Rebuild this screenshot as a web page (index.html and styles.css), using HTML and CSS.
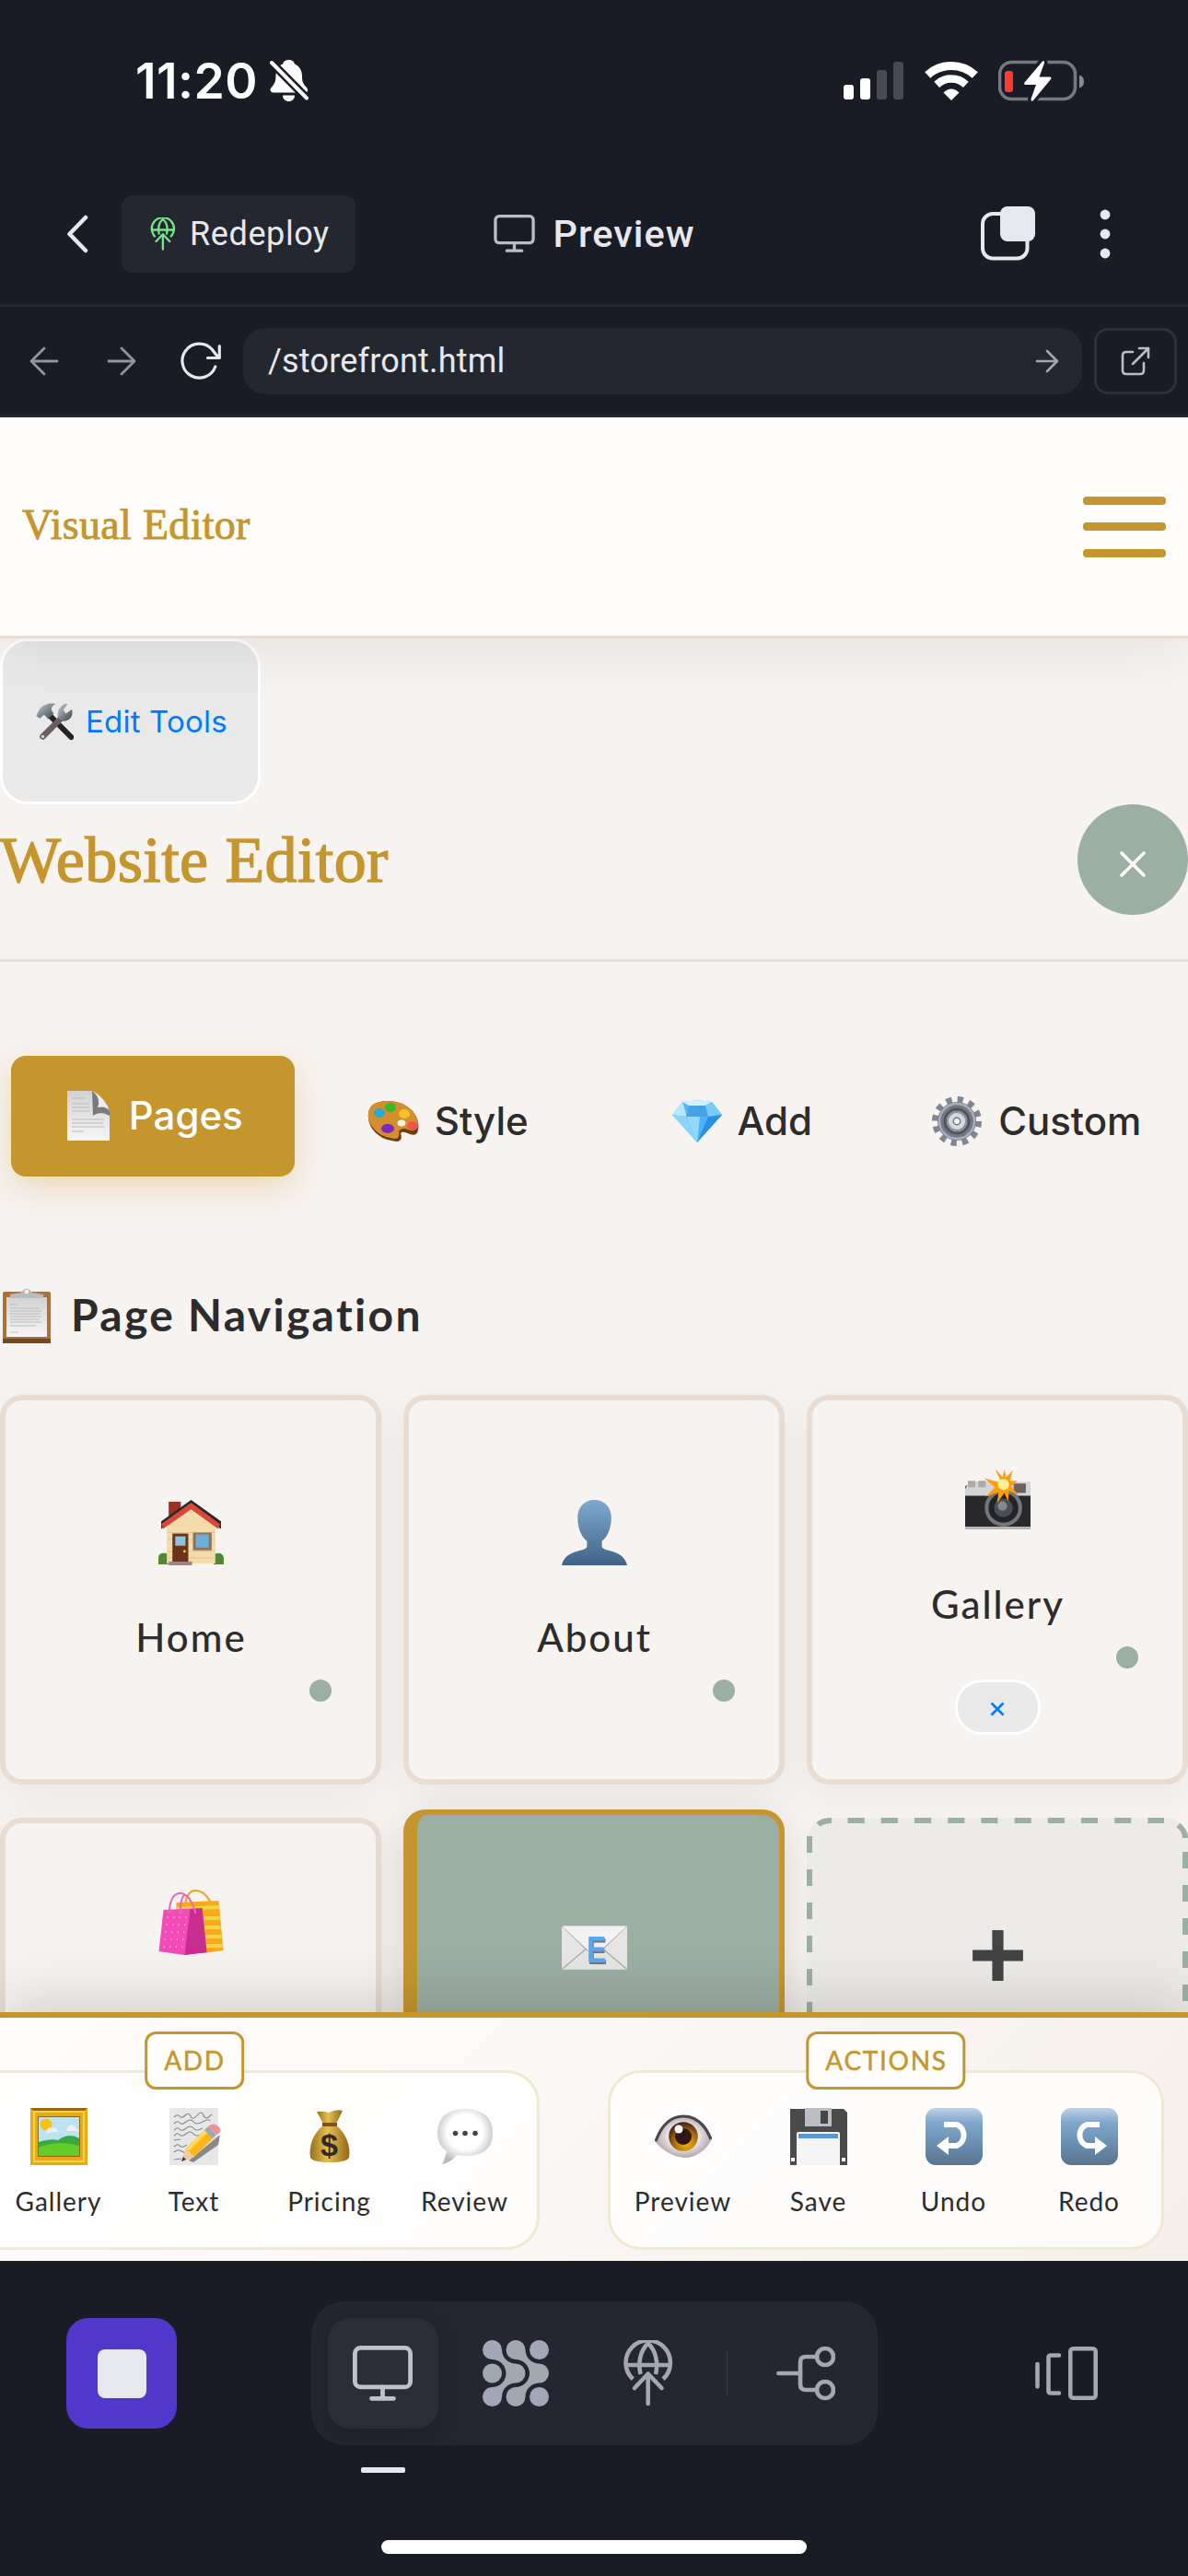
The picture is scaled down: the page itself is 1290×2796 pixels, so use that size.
FILE: index.html
```html
<!DOCTYPE html>
<html lang="en">
<head>
<meta charset="utf-8">
<title>Preview</title>
<link rel="stylesheet" href="styles.css">
</head>
<body>
<svg class="defs" width="0" height="0" aria-hidden="true">
  <defs>
    <linearGradient id="gBlue" x1="0" y1="0" x2="0" y2="1"><stop offset="0" stop-color="#bcd3e6"/><stop offset=".25" stop-color="#80a8cc"/><stop offset=".6" stop-color="#6d90b1"/><stop offset="1" stop-color="#587490"/></linearGradient>
    <linearGradient id="gUser" x1="0" y1="0" x2="0" y2="1"><stop offset="0" stop-color="#7eaacf"/><stop offset="1" stop-color="#426287"/></linearGradient>
    <linearGradient id="gPaper" x1="0" y1="0" x2="0" y2="1"><stop offset="0" stop-color="#d2d2d2"/><stop offset="1" stop-color="#f6f6f6"/></linearGradient>
    <linearGradient id="gSteel" x1="0" y1="0" x2="1" y2="1"><stop offset="0" stop-color="#c9d0d8"/><stop offset=".5" stop-color="#7f868e"/><stop offset="1" stop-color="#3f4349"/></linearGradient>
    <linearGradient id="gGold" x1="0" y1="0" x2="1" y2="0"><stop offset="0" stop-color="#99701b"/><stop offset=".45" stop-color="#e4c04f"/><stop offset="1" stop-color="#94671b"/></linearGradient>
    <radialGradient id="gBubble" cx=".5" cy=".42" r=".58"><stop offset=".55" stop-color="#fff"/><stop offset="1" stop-color="#b9b9b9"/></radialGradient>
    <radialGradient id="gEye" cx=".5" cy=".5" r=".6"><stop offset=".3" stop-color="#fff"/><stop offset="1" stop-color="#9c8a92"/></radialGradient>
    <radialGradient id="gIris" cx=".6" cy=".75" r=".7"><stop offset="0" stop-color="#f2b705"/><stop offset=".6" stop-color="#a8690c"/><stop offset="1" stop-color="#4b2c16"/></radialGradient>
    <symbol id="i-globe" viewBox="0 0 56 72">
      <g fill="none" stroke="currentColor" stroke-width="4.6" stroke-linecap="round" stroke-linejoin="round">
        <path d="M11.3 42.3A24.2 24.2 0 1 1 44.1 42.3" stroke-linecap="butt"/>
        <path d="M4 27h47.5"/>
        <path d="M19.5 37C16.5 24 19.500 11 27.700 3.500C36 11 39 24 36 37" stroke-linecap="butt"/>
        <path d="M27.700 37V69M13 52L27.700 36.500L42.500 52"/>
      </g>
    </symbol>
    <symbol id="i-monitor" viewBox="0 0 65 60">
      <g fill="none" stroke="currentColor" stroke-width="4.800">
        <rect x="2.400" y="2.400" width="60.200" height="42.500" rx="6"/>
        <path d="M32.500 45V57M20.500 57.300H44.500" stroke-linecap="round"/>
      </g>
    </symbol>
  </defs>
</svg>

<div class="screen">
  <div class="status">
    <div class="status-left">
      <span class="clock">11:20</span>
      <svg class="bell" viewBox="0 0 42 47"><path d="M20.500 1c3.500 0 6 2 6.500 4.500 5.500 2.500 8 7.500 8 13 0 7 1.500 9 5 12.500 2 2.500 1 5.500-2 5.500H4c-3.500 0-4.500-3-2.500-5.500C5 27.500 6.200 25 6.500 18.500 6.700 12 9 7.500 14 5.500 14.500 3 17 1 20.500 1Z" fill="#fff"/><path d="M14 39.500h13c0 4-3 6.500-6.500 6.500S14 43.500 14 39.500Z" fill="#fff"/><path d="M2 4L40 42.500" stroke="#1a1c25" stroke-width="9"/><path d="M2 4L40 42.500" stroke="#fff" stroke-width="4" stroke-linecap="round"/></svg>
    </div>
    <div class="status-right">
      <div class="signal"><i></i><i></i><i class="off"></i><i class="off"></i></div>
      <svg class="wifi" viewBox="0 0 58 43"><g fill="none" stroke="#fff"><path d="M3.200 15.500a38 38 0 0 1 51.600 0" stroke-width="9"/><path d="M13.200 25.800a23 23 0 0 1 31.600 0" stroke-width="8.500"/></g><path d="M20.500 34.500Q29 26.500 37.500 34.500L29 43Z" fill="#fff"/></svg>
      <svg class="battery" viewBox="0 0 94 46"><rect x="1.500" y="2.500" width="82" height="40" rx="13" fill="none" stroke="#777980" stroke-width="3.600"/><path d="M88 16.500q5 1.500 5 7t-5 7Z" fill="#8a8b91"/><rect x="7" y="12" width="9" height="23" rx="3" fill="#ff3b30"/><path d="M48 1.500Q50 0 50 3.500L44.500 18.500H56Q58.500 19 57 21L38 44Q35.500 46 35.500 42.500L41 27H29.500Q27.500 26.500 28.500 24.500Z" fill="#fff" stroke="#1a1c25" stroke-width="7" paint-order="stroke"/></svg>
    </div>
  </div>

  <header class="topbar">
    <div class="top-left">
      <svg class="chevron" viewBox="0 0 24 42"><path d="M21 3L3.500 21L21 39" fill="none" stroke="#e7e8ee" stroke-width="4.500" stroke-linecap="round" stroke-linejoin="round"/></svg>
      <button class="redeploy"><svg class="globe-sm"><use href="#i-globe"/></svg><span>Redeploy</span></button>
    </div>
    <div class="top-title"><svg class="monitor-sm"><use href="#i-monitor"/></svg><span>Preview</span></div>
    <div class="top-right">
      <svg class="windows" viewBox="0 0 60 60"><rect x="2" y="8" width="48.500" height="48.500" rx="11" fill="none" stroke="#e7e8ee" stroke-width="4"/><rect x="21" y="0" width="38" height="38" rx="8" fill="#e7e8ee"/></svg>
      <svg class="dots" viewBox="0 0 12 54"><circle cx="6" cy="6" r="5.400"/><circle cx="6" cy="27" r="5.400"/><circle cx="6" cy="48" r="5.400"/></svg>
    </div>
  </header>

  <nav class="urlbar">
    <svg class="nav-arrow" viewBox="0 0 32 32"><path d="M30 16H2M16 2L2 16L16 30" /></svg>
    <svg class="nav-arrow fwd" viewBox="0 0 32 32"><path d="M2 16H30M16 2L30 16L16 30"/></svg>
    <svg class="reload" viewBox="0 0 46 42"><path d="M37.800 27A18.500 18.500 0 1 1 34 8L41 17M42.300 4.500V17.500H29.500"/></svg>
    <div class="url"><span>/storefront.html</span><svg viewBox="0 0 26 26"><path d="M2 13H24M13 2L24 13L13 24"/></svg></div>
    <div class="external"><svg viewBox="0 0 32 32"><path d="M13 6H6Q2 6 2 10V26Q2 30 6 30H21Q25 30 25 26V18M20 2H30V12M30 2L13 19"/></svg></div>
  </nav>

  <main class="page">
    <div class="site-header">
      <span class="brand">Visual Editor</span>
      <div class="burger"><i></i><i></i><i></i></div>
    </div>
    <div class="editor">
      <button class="edit-tools">
        <svg class="tools" viewBox="0 0 64 64"><path d="M24 22L60 58" stroke="#222428" stroke-width="9" stroke-linecap="round"/><path d="M43 27L13 57" stroke="#6d5d62" stroke-width="10" stroke-linecap="round"/><circle cx="13" cy="57" r="2.500" fill="#ddd"/><path d="M2 23L8 11Q18 0 34 3Q27 6 27 13L31 19L22 28L15 21L8 27Z" fill="url(#gSteel)"/><path d="M38 25Q36 13 44 6Q49 2 54 3L47 13L51 19L61 12Q64 23 56 29Q50 33 44 31Z" fill="url(#gSteel)"/></svg>
        <span>Edit Tools</span>
      </button>
      <div class="panel-head"><h1>Website Editor</h1><button class="close"><svg viewBox="0 0 28 28"><path d="M2 2L26 26M26 2L2 26"/></svg></button></div>
      <div class="tabs">
        <button class="tab active"><svg class="e-page" viewBox="0 0 46 54"><path d="M0 0H27L46 20V54H0Z" fill="url(#gPaper)"/><path d="M5 8H20M5 14H24M5 18H24M5 22H25M5 31H40M5 35H39M5 39H40M5 44H18" stroke="#bbb" stroke-width="1.200"/><path d="M27 0L28 27Q36 21 46 27V20Z" fill="#7a7a7a"/><path d="M28 0Q37 9 33 18Q42 16 46 22Q42 9 28 0Z" fill="#eee"/></svg><span>Pages</span></button>
        <button class="tab"><svg class="e-art" viewBox="0 0 56 46"><path d="M1 15Q2 3 19 1Q38 0 49 12Q57 22 55 32Q54 40 46 37Q38 33 36 36Q39 45 31 45Q13 43 5 31Q0 23 1 15Z" fill="#6d3d12"/><path d="M1 14Q2 2 19 1Q38 0 49 12Q57 22 54 30Q51 35 44 32Q37 29 34 34Q36 42 29 42Q13 40 5 29Q0 22 1 14Z" fill="#d58e2d"/><ellipse cx="13" cy="14" rx="6" ry="5" fill="#26a8d8"/><ellipse cx="25" cy="8" rx="6" ry="5" fill="#37b928"/><ellipse cx="40" cy="15" rx="6" ry="5" fill="#f5c22c"/><ellipse cx="49" cy="28" rx="6" ry="4.500" fill="#ef5550"/><ellipse cx="22" cy="31" rx="7" ry="5" fill="#7b28bd"/><ellipse cx="37" cy="25" rx="4.500" ry="3.500" fill="#f7f3f0"/></svg><span>Style</span></button>
        <button class="tab"><svg class="e-gem" viewBox="0 0 54 46"><path d="M11 2Q27-1 43 2L54 16L27 46L0 16Z" fill="#57b7f4"/><path d="M0 16L11 2L16 18Z" fill="#b9e8fd"/><path d="M11 2Q27-1 43 2L36 6H18Z" fill="#d3f1fe"/><path d="M18 6H36L39 18H15Z" fill="#46a2e4"/><path d="M43 2L54 16L39 18L36 6Z" fill="#79cbfa"/><path d="M0 16L15 18L27 46Z" fill="#8bd4fa"/><path d="M15 18H39L27 46Z" fill="#4fb0f2"/><path d="M15 18H30L27 46Z" fill="#91dafc"/><path d="M39 18L54 16L27 46Z" fill="#2a90df"/></svg><span>Add</span></button>
        <button class="tab"><svg class="e-gear" viewBox="-28 -28 56 56"><g fill="none"><circle r="23.500" stroke="#7f8794" stroke-width="7" stroke-dasharray="6.200 6.100"/><circle r="16" stroke="#747a85" stroke-width="10"/><circle r="19" stroke="#a9afbb" stroke-width="2.500"/><circle r="13" stroke="#50565f" stroke-width="3"/><circle r="6.500" stroke="#d5d9e0" stroke-width="5"/><circle r="10" stroke="#8b919c" stroke-width="2"/><circle r="3.800" stroke="#666" stroke-width="1.200"/></g></svg><span>Custom</span></button>
      </div>
      <h2><svg class="e-clip" viewBox="0 0 52 60"><rect x="0" y="4" width="52" height="56" rx="2" fill="#a8733a"/><path d="M4 10H48V53H4Z" fill="url(#gPaper)"/><path d="M0 55H52V60H0Z" fill="#74481d"/><path d="M8 18H15M8 22H40M8 25H42M8 28H41M8 31H42M8 34H40M8 37H42M8 41H36M8 48H17" stroke="#bbb" stroke-width="1.200"/><path d="M8 11V7L20 5Q26-4 32 5L44 7V11Z" fill="#b5bcc4"/><circle cx="26" cy="4" r="2.200" fill="#f7f3f0"/></svg><span>Page Navigation</span></h2>

      <div class="cards">
        <div class="card">
          <svg class="emoji" viewBox="0 0 70 70"><path d="M0 62Q0 57 6 57T11 62V69H0ZM59 62Q59 57 64 57T70 62V69H59Z" fill="#4f8a32"/><path d="M11 2H24V22L11 32Z" fill="#9c2f28"/><path d="M9 28L35 6L61 28V68H9Z" fill="#f3dbab"/><path d="M10 35H60M10 42H60M10 55H60M10 62H60" stroke="#dfc38e"/><path d="M35 0L67 23V31L35 8L3 31V23Z" fill="#2c2525"/><path d="M35 3L66 26L64 31L35 10L5 31L3 26Z" fill="#d8473a"/><rect x="15" y="36" width="17" height="31" fill="#6e331d"/><rect x="18" y="39" width="11" height="10" fill="#8fc2de"/><circle cx="28" cy="55" r="1.500" fill="#f1c046"/><rect x="37" y="35" width="20" height="19" fill="#8e7458"/><rect x="40" y="37" width="14" height="14" fill="#6fafdb"/><path d="M11 66H36V70H11Z" fill="#948985"/></svg>
          <div class="label">Home<i class="dot"></i></div>
        </div>
        <div class="card">
          <svg class="emoji" viewBox="0 0 70 70"><path d="M35 0C46 0 53 8 53 19C53 30 49 40 43 44V50C44 56 66 52 70 70H0C4 52 26 56 27 50V44C21 40 17 30 17 19C17 8 24 0 35 0Z" fill="url(#gUser)"/></svg>
          <div class="label">About<i class="dot"></i></div>
        </div>
        <div class="card upper">
          <svg class="emoji" viewBox="0 0 70 70"><rect x="0" y="20" width="70" height="46" rx="2" fill="#29292b"/><path d="M0 24L4 16H70V31H0Z" fill="#d3d4d6"/><path d="M3 15H11V22H3ZM14 15H22V22H14Z" fill="#aaa"/><rect x="52" y="18" width="13" height="10" fill="#6d625c"/><circle cx="41" cy="44" r="20" fill="#757679"/><circle cx="41" cy="44" r="16" fill="#232427"/><circle cx="41" cy="44" r="10" fill="#4b4f55"/><circle cx="40" cy="42" r="5" fill="#838891"/><path d="M0 64H70V67H0Z" fill="#b6b6b8"/><path d="M40 20L32 2L40 11L42 3L44 11L51 4L48 15L56 15L49 21L57 30L47 26L46 37L42 28L34 39L36 27L22 32L32 22L20 12L34 16Z" fill="#ff9d0f"/><circle cx="41" cy="19" r="6" fill="#fff28c"/></svg>
          <div class="label">Gallery<i class="dot"></i></div>
          <button class="pill"><svg viewBox="0 0 16 16"><path d="M1.500 1.500L14.500 14.500M14.500 1.500L1.500 14.500"/></svg></button>
        </div>
        <div class="card upper">
          <svg class="emoji" viewBox="0 0 70 71"><path d="M19 14L65 12L70 66L48 69L19 60Z" fill="#f5ac18"/><path d="M19 19L66 17V21L19 23ZM19 29H66V33H19ZM19 39H67V43H19ZM50 49H68V53H50ZM50 59H69V63H50Z" fill="#f1d34c"/><path d="M29 14Q31 1 40 1T56 13" fill="none" stroke="#f0a41c" stroke-width="2"/><path d="M5 22L47 20L52 68L28 71L0 67Z" fill="#f44bb8"/><path d="M34 21L47 20L52 68L28 71Z" fill="#c92d90"/><path d="M11 27Q12 4 23 4T40 26M24 26Q22 12 28 5" fill="none" stroke="#ef62b9" stroke-width="2"/><path d="M9 30H30M8 38H29M7 46H28M6 54H27M5 62H26" stroke="#ffa6df" stroke-width="1.500" stroke-dasharray="1.500 5"/></svg>
        </div>
        <div class="card selected">
          <svg class="emoji" viewBox="0 0 70 70"><rect x="0" y="12" width="70" height="47" rx="2" fill="#e6e6e6"/><path d="M1 13L28 39M69 13L42 39M1 58L27 36M69 58L43 36" stroke="#aaa" stroke-width="1.200"/><path d="M1 13H69L41 39Q35 44 29 39Z" fill="#f2f2f2"/><text x="37" y="51" text-anchor="middle" font-family="Liberation Sans" font-weight="700" font-size="40" textLength="21" lengthAdjust="spacingAndGlyphs" fill="#57a8f8" class="letter">E</text></svg>
        </div>
        <div class="card add">
          <svg class="dashes" viewBox="0 0 414 423"><g fill="none" stroke="#9cafa3" stroke-width="6"><path d="M44.600 3H388" stroke-dasharray="18.100 18.100"/><path d="M3 20V423" stroke-dasharray="18 18"/><path d="M411 37V423" stroke-dasharray="18 18"/><path d="M12.500 7.500Q17 3 27 3M403.500 8Q411 14 411 22"/></g></svg>
          <svg class="emoji plus" viewBox="0 0 70 70"><path d="M35 8V62M8 35H62" stroke="#444" stroke-width="12"/></svg>
        </div>
      </div>
    </div>

    <div class="toolbar">
      <section class="group first">
        <span class="group-name">ADD</span>
        <div class="tool"><svg viewBox="0 0 62 62"><path d="M0 0H62V62H0Z" fill="#e5ac17"/><path d="M0 0H62L56 5H6Z" fill="#9a6710"/><path d="M4 4H58V58H4Z" fill="none" stroke="#f8d23e" stroke-width="2"/><path d="M8 9H54V53H8Z" fill="#94650f"/><path d="M9 10H53V52H9Z" fill="#bce3f2"/><circle cx="17" cy="18" r="6.500" fill="#f9bf16"/><path d="M17 27Q18 20 24 22Q29 20 30 26ZM39 25Q42 15 48 20L53 25Z" fill="#edf0f7"/><path d="M9 37Q22 33 30 35Q42 26 53 33V52H9Z" fill="#39a742"/><path d="M9 43Q30 34 53 41V52H9Z" fill="#62cd28"/></svg><span>Gallery</span></div>
        <div class="tool"><svg viewBox="0 0 62 62"><path d="M4 0H57V62H4Z" fill="#e7e7e7"/><path d="M9 10q4-4 6-1t6-1 6 1 7-1 7 0 9-1M9 17q4-4 6-1t7-1 8 0 10 0 8-1M9 24q4-4 6-1t7-1 8 0 10 0M9 30q4-4 6-1t7-1 8 0 10 0M9 35l7-1M9 42q4-4 6-1t8-1M9 48q4-4 8-1t8-1M9 56l8-1" fill="none" stroke="#888" stroke-width="1.100"/><path d="M25 57L59 29L57 40L30 59Z" fill="#888"/><path d="M17 58L22 44L44 22L53 31L31 53Z" fill="#f7b719"/><path d="M22 44L44 22L47 25L25 47Z" fill="#ffd954"/><path d="M17 58L22 44L31 53Z" fill="#eccda2"/><path d="M17 58L19 53L22 56Z" fill="#333"/><path d="M42 24L46 20L55 29L51 33Z" fill="#9aa8b5"/><path d="M46 20Q51 15 57 20T55 29Z" fill="#ef8f98"/></svg><span>Text</span></div>
        <div class="tool"><svg viewBox="0 0 62 62"><path d="M17 4Q24 3 30 5Q38 1 45 3L38 17H24Z" fill="url(#gGold)"/><path d="M24 19H38C49 27 54 42 52 54Q49 59 31 59T10 54C8 42 13 27 24 19Z" fill="url(#gGold)"/><path d="M23 16H39V20H23Z" fill="#80531c"/><text x="31" y="52" text-anchor="middle" font-family="Liberation Sans" font-weight="700" font-size="34" fill="#35282a">$</text></svg><span>Pricing</span></div>
        <div class="tool"><svg viewBox="0 0 62 62"><path d="M31 1Q61 2 61 27T32 52Q27 52 22 51Q16 59 6 61Q10 54 11 47Q1 41 1 26Q2 2 31 1Z" fill="url(#gBubble)"/><g fill="#444"><circle cx="20.500" cy="27.500" r="2.800"/><circle cx="31" cy="27.500" r="2.800"/><circle cx="42" cy="27.500" r="2.800"/></g></svg><span>Review</span></div>
      </section>
      <section class="group">
        <span class="group-name">ACTIONS</span>
        <div class="tool"><svg viewBox="0 0 62 62"><path d="M0 36Q10 8 31 8T62 34Q51 54 32 54Q13 52 0 36Z" fill="url(#gEye)"/><circle cx="31" cy="31" r="15.800" fill="url(#gIris)"/><circle cx="31" cy="31" r="9" fill="#301616"/><circle cx="26" cy="23" r="4.500" fill="#fff"/><path d="M1 36Q11 9 31 9T61 34" fill="none" stroke="#4c454d" stroke-width="3.200"/></svg><span>Preview</span></div>
        <div class="tool"><svg viewBox="0 0 62 62"><path d="M0 1H58L62 5V62H0Z" fill="#4a4a4a"/><path d="M16 0H45V20H16Z" fill="#babdc1"/><path d="M33 3H41V17H33Z" fill="#454545"/><path d="M7 62V28Q7 26 9 26H52Q54 26 54 28V62Z" fill="#f5f5f5"/><path d="M9 28H52V33H9Z" fill="#5898d2"/><path d="M1 54H5V58H1ZM56 54H60V58H56Z" fill="#fff"/></svg><span>Save</span></div>
        <div class="tool"><svg viewBox="0 0 62 62"><rect width="62" height="62" rx="11" fill="url(#gBlue)"/><path d="M20 18H34A12.500 12.500 0 0 1 34 41H22" fill="none" stroke="#fff" stroke-width="6"/><path d="M12 41L25 31V51Z" fill="#fff"/></svg><span>Undo</span></div>
        <div class="tool"><svg viewBox="0 0 62 62"><rect width="62" height="62" rx="11" fill="url(#gBlue)"/><path d="M42 18H28A12.500 12.500 0 0 0 28 41H40" fill="none" stroke="#fff" stroke-width="6"/><path d="M50 41L37 31V51Z" fill="#fff"/></svg><span>Redo</span></div>
      </section>
    </div>
  </main>

  <footer class="dock">
    <div class="dock-row">
      <button class="stop"><i></i></button>
      <div class="dock-tabs">
        <button class="dock-tab on"><svg class="monitor"><use href="#i-monitor"/></svg></button>
        <button class="dock-tab"><svg class="mesh" viewBox="0 0 72 72"><g fill="currentColor"><path id="blob" d="M10.500 0A10.500 10.500 0 0 1 21 10.500C21 18.800 27.700 25.500 36 25.500A10.500 10.500 0 0 1 36 46.500C27.700 46.500 21 53.200 21 61.500A10.500 10.500 0 1 1 10.500 51C18.800 51 25.500 44.300 25.500 36C25.500 27.700 18.800 21 10.500 21A10.500 10.500 0 0 1 10.500 0Z"/><use href="#blob" x="25.500"/><circle cx="10.500" cy="36" r="10.500"/><circle cx="61.500" cy="10.500" r="10.500"/><circle cx="61.500" cy="61.500" r="10.500"/></g></svg></button>
        <button class="dock-tab"><svg class="globe"><use href="#i-globe"/></svg></button>
        <i class="sep"></i>
        <button class="dock-tab"><svg class="branch" viewBox="0 0 64 60"><g fill="none" stroke="currentColor" stroke-width="4.700" stroke-linecap="round"><path d="M2.400 30H26M43 12H32Q26 12 26 18V42Q26 48 32 48H43"/><circle cx="53" cy="12" r="9"/><circle cx="53" cy="48" r="9"/></g></svg></button>
      </div>
      <svg class="panels" viewBox="0 0 68 58"><g fill="none" stroke="#a1a7b3" stroke-width="4.600" stroke-linecap="round"><path d="M2.500 19V43.500M26 9.500H17Q14.500 9.500 14.500 12V48Q14.500 50.500 17 50.500H26"/><rect x="38.300" y="2.300" width="27.400" height="53.400" rx="3"/></g></svg>
    </div>
    <div class="home"></div>
  </footer>
</div>
</body>
</html>
```
FILE: styles.css
```css
* { box-sizing: border-box; }
html, body { margin: 0; padding: 0; }
body { width: 1290px; height: 2796px; overflow: hidden; background: #1a1c25; font-family: Inter, sans-serif; }
button { border: 0; padding: 0; margin: 0; background: none; font: inherit; color: inherit; }
svg { display: block; flex: none; }
span { white-space: nowrap; }
.defs { position: absolute; }
.screen { display: flex; flex-direction: column; width: 1290px; height: 2796px; background: #1a1c25; overflow: hidden; }

/* Status bar */
.status { height: 177px; flex: none; display: flex; justify-content: space-between; align-items: center; padding: 0 112px 2px 147px; }
.status-left, .status-right { display: flex; align-items: center; }
.clock { color: #fff; font-size: 53.5px; font-weight: 600; letter-spacing: .4px; width: 146px; }
.bell { width: 42px; height: 47px; }
.signal { display: flex; align-items: flex-end; gap: 7px; height: 41px; }
.signal i { width: 11px; border-radius: 3px; background: #fff; height: 16px; }
.signal i:nth-child(2) { height: 23px; }
.signal .off { background: #484953; height: 32px; }
.signal .off:last-child { height: 41px; }
.wifi { width: 58px; height: 43px; margin: 0 22px 0 23px; }
.battery { width: 94px; height: 46px; }

/* App header */
.topbar { height: 156px; flex: none; border-bottom: 3px solid #242730; display: grid; grid-template-columns: 1fr auto 1fr; align-items: center; color: #e7e8ee; font-family: Roboto, sans-serif; }
.top-left { display: flex; align-items: center; padding-left: 72px; }
.chevron { width: 24px; height: 42px; margin-right: 36px; }
.redeploy { width: 254px; height: 84px; border-radius: 12px; background: #242730; display: flex; align-items: center; padding-left: 31px; gap: 15px; font-size: 36px; letter-spacing: .6px; }
.globe-sm { width: 28px; height: 36px; color: #76e68a; }
.top-title { display: flex; align-items: center; gap: 20px; font-size: 41.5px; font-weight: 500; letter-spacing: 1px; }
.monitor-sm { width: 45px; height: 41px; color: #b9bdc8; }
.top-right { display: flex; align-items: center; justify-content: flex-end; padding-right: 84px; gap: 69px; }
.windows { width: 60px; height: 60px; }
.dots { width: 12px; height: 54px; fill: #e7e8ee; }

.urlbar { height: 120px; flex: none; border-bottom: 3px solid #242730; display: flex; align-items: center; padding: 0 12px 0 32px; font-family: Roboto, sans-serif; }
.urlbar path { fill: none; stroke-linecap: round; stroke-linejoin: round; }
.nav-arrow { width: 32px; height: 32px; stroke: #8f95a3; stroke-width: 2.8; margin-right: 52px; }
.nav-arrow.fwd { margin-right: 48px; }
.reload { width: 46px; height: 42px; stroke: #e7e8ee; stroke-width: 3.2; margin-right: 22px; }
.url { flex: 1; height: 72px; border-radius: 24px; background: #242730; color: #e7e8ee; font-size: 36px; letter-spacing: .2px; display: flex; align-items: center; justify-content: space-between; padding: 0 25px 0 27px; }
.url svg { width: 26px; height: 26px; stroke: #a1a7b3; stroke-width: 2.6; }
.external { width: 90px; height: 72px; margin-left: 13px; border: 3px solid #2e313c; border-radius: 15px; display: flex; align-items: center; justify-content: center; }
.external svg { width: 32px; height: 32px; stroke: #b9bdc8; stroke-width: 2.6; }

/* Previewed page */
.page { height: 2001px; flex: none; display: flex; flex-direction: column; overflow: hidden; background: #f7f3f0; color: #2c2c2c; }
.site-header { position: relative; z-index: 2; height: 240px; flex: none; background: #fffefd; border-bottom: 3px solid #e8dcd3; box-shadow: 0 12px 60px rgba(0,0,0,.08); display: flex; justify-content: space-between; align-items: center; padding: 0 24px; }
.brand { font-family: "Liberation Serif", serif; font-size: 46px; color: #c5962d; -webkit-text-stroke: .9px #c5962d; letter-spacing: .3px; padding-bottom: 4px; }
.burger { width: 90px; display: flex; flex-direction: column; gap: 19.500px; }
.burger i { height: 9px; border-radius: 4px; background: #c5962d; }

.editor { flex: 1; min-height: 0; overflow: hidden; }
.edit-tools { width: 283px; height: 180px; border: 3px solid #fff; border-radius: 30px; background: #e9e9e9; display: flex; align-items: center; padding-left: 35px; gap: 13px; color: #007aff; font-size: 33px; letter-spacing: .2px; }
.tools { width: 42px; height: 42px; }
.panel-head { height: 171px; border-bottom: 3px solid #e8dcd3; display: flex; justify-content: space-between; align-items: flex-start; }
h1 { margin: 0; font: 400 70px/122px "Liberation Serif", serif; letter-spacing: .4px; color: #c5962d; -webkit-text-stroke: 1.4px #c5962d; }
.close { width: 120px; height: 120px; border-radius: 50%; background: #9cafa3; display: flex; align-items: center; justify-content: center; padding-top: 9px; }
.close svg { width: 28px; height: 28px; stroke: #fff; stroke-width: 3.6; stroke-linecap: round; }

.tabs { margin-top: 108px; padding: 0 12px; display: grid; grid-template-columns: repeat(4, 1fr); gap: 12px; }
.tab { height: 131px; border-radius: 16px; display: flex; align-items: center; justify-content: center; gap: 17px; padding: 0 0 2px 2px; font-size: 42px; font-weight: 500; }
.tab.active { background: #c5962d; color: #fff; transform: translateY(-6px); box-shadow: 0 12px 36px rgba(197,150,45,.28); gap: 21px; padding-left: 5px; }
.e-page { width: 46px; height: 54px; }
.e-art { width: 56px; height: 46px; }
.e-gem { width: 54px; height: 46px; }
.e-gear { width: 56px; height: 56px; }
h2 { margin: 115px 0 56px; height: 60px; padding-left: 2px; display: flex; align-items: center; gap: 21px; font-family: Lato, sans-serif; font-size: 48px; font-weight: 700; line-height: 60px; letter-spacing: 2.3px; }
h2 span { position: relative; top: -1px; }
.e-clip { width: 54px; height: 60px; }

.cards { display: grid; grid-template-columns: repeat(3, 1fr); grid-auto-rows: 423px; gap: 36px 24px; font-family: Lato, sans-serif; }
.card { position: relative; border: 6px solid #e8dcd3; border-radius: 24px; background: #f7f3f0; box-shadow: 0 12px 48px rgba(0,0,0,.055); display: flex; flex-direction: column; align-items: center; padding-top: 108px; }
.card.upper { padding-top: 72px; }
.card.selected { background: #9cafa3; border-color: #c5962d; border-left-width: 15px; padding-right: 9px; transform: translateY(-9px); box-shadow: 0 12px 48px rgba(0,0,0,.12); }
.card.add { background: #ecebe7; border-color: transparent; box-shadow: none; }
.dashes { position: absolute; left: -6px; top: -6px; width: 414px; height: 423px; }
.letter { filter: drop-shadow(1.5px 2px 0 #777); }
.emoji { width: 71px; height: 71px; }
.label { position: relative; width: 100%; margin-top: 48px; text-align: center; font-size: 42px; font-weight: 500; line-height: 60px; letter-spacing: 2px; text-indent: 1px; }
.dot { position: absolute; right: 48px; top: 76px; width: 24px; height: 24px; border-radius: 50%; background: #9cafa3; }
.pill { width: 93px; height: 60px; margin-top: 52px; border: 3px solid #fff; border-radius: 29px; background: #e9e9e9; display: flex; align-items: center; justify-content: center; padding-top: 4px; }
.pill svg { width: 16px; height: 16px; stroke: #007aff; stroke-width: 2.6; }

/* Page toolbar */
.toolbar { position: relative; z-index: 3; height: 270px; flex: none; border-top: 6px solid #c5962d; background: linear-gradient(135deg, #fffefd, #f5efea); box-shadow: 0 -12px 60px rgba(0,0,0,.15); display: flex; gap: 74px; align-items: flex-start; padding-top: 57px; font-family: Lato, sans-serif; }
.group { position: relative; flex: none; height: 195px; border: 3px solid #f1e7d3; border-radius: 36px; background: rgba(255,255,255,.75); display: flex; gap: 12px; padding: 38px 11px 0; }
.group.first { margin-left: -164px; width: 750px; justify-content: flex-end; }
.group-name { position: absolute; left: 50%; top: -45px; transform: translateX(-50%); height: 63px; line-height: 57px; border: 3px solid #c5962d; border-radius: 12px; background: #fffefd; color: #c5962d; font-size: 28px; letter-spacing: 1.7px; padding: 0 17px 0 18px; -webkit-text-stroke: .5px #c5962d; }
.tool { width: 135px; display: flex; flex-direction: column; align-items: center; font-size: 28px; line-height: 36px; letter-spacing: 1px; }
.tool svg { width: 62px; height: 62px; margin-bottom: 21px; }

/* App dock */
.dock { height: 342px; padding-top: 44px; }
.dock-row { display: grid; grid-template-columns: 1fr auto 1fr; align-items: center; height: 156px; padding: 0 72px; }
.stop { width: 120px; height: 120px; border-radius: 24px; background: #5138ca; display: flex; align-items: center; justify-content: center; }
.stop i { width: 53px; height: 53px; border-radius: 8px; background: #e7e8ee; }
.dock-tabs { width: 615px; height: 156px; border-radius: 36px; background: #242730; display: flex; align-items: center; padding-left: 18px; gap: 24px; color: #a1a7b3; }
.dock-tab { position: relative; width: 120px; height: 120px; border-radius: 24px; display: flex; align-items: center; justify-content: center; }
.dock-tab.on { background: #2b2d39; color: #bfc2ca; box-shadow: 0 9px 24px rgba(20,18,28,.35); }
.dock-tab.on::after { content: ""; position: absolute; left: 36px; top: 162px; width: 48px; height: 6px; border-radius: 2px; background: #e7e8ee; }
.monitor { width: 65px; height: 60px; }
.mesh { width: 72px; height: 72px; }
.globe { width: 56px; height: 72px; }
.sep { width: 3px; height: 48px; background: #2f323e; }
.branch { width: 64px; height: 60px; }
.panels { width: 68px; height: 58px; justify-self: end; margin-right: 26px; }
.home { width: 462px; height: 15px; border-radius: 8px; background: #fff; margin: 103px auto 0; }
```
